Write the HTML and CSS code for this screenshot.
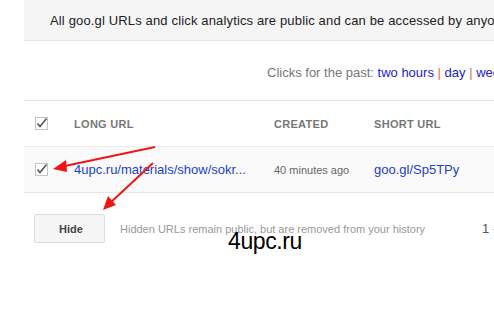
FILE: index.html
```html
<!DOCTYPE html>
<html lang="en">
<head>
  <meta charset="UTF-8" />
  <title>goo.gl URL shortener</title>
  <link rel="stylesheet" href="styles.css">
</head>
<body>

<div class="page">
  <div class="notice">All goo.gl URLs and click analytics are public and can be accessed by anyone.</div>

  <div class="range">
    Clicks for the past: <a href="#">two hours</a> <span class="sep">|</span> <a href="#">day</a> <span class="sep">|</span> <a href="#">week</a>
  </div>

  <div class="urls">
    <div class="row head">
      <span class="check"><svg width="13" height="13" viewBox="0 0 13 13"><rect x="0.5" y="0.5" width="12" height="12" fill="#fff" stroke="#c6c6c6"/><path d="M2.5 6.5 L5 9.5 L11.5 1.5" fill="none" stroke="#555" stroke-width="1.6"/></svg></span>
      <span>LONG URL</span>
      <span>CREATED</span>
      <span>SHORT URL</span>
    </div>
    <div class="row item">
      <span class="check"><svg width="13" height="13" viewBox="0 0 13 13"><rect x="0.5" y="0.5" width="12" height="12" fill="#fff" stroke="#c6c6c6"/><path d="M2.5 6.5 L5 9.5 L11.5 1.5" fill="none" stroke="#555" stroke-width="1.6"/></svg></span>
      <a href="#" class="long">4upc.ru/materials/show/sokr...</a>
      <span class="created">40 minutes ago</span>
      <a href="#" class="short">goo.gl/Sp5TPy</a>
    </div>
  </div>

  <div class="footer">
    <button class="button">Hide</button>
    <span class="hint">Hidden URLs remain public, but are removed from your history</span>
    <span class="pages">1 - 1 of 1</span>
  </div>
</div>

<div class="watermark">4upc.ru</div>

<svg class="arrows" width="494" height="314" viewBox="0 0 494 314">
  <g stroke="#f01515" stroke-width="2" fill="#f01515">
    <line x1="155" y1="147" x2="60" y2="167"/>
    <polygon points="53,169 66,160 67,172" stroke="none"/>
    <line x1="153" y1="163" x2="109" y2="204"/>
    <polygon points="103,210 108,196 116,205" stroke="none"/>
  </g>
</svg>

</body>
</html>
```

FILE: styles.css
```css
body {
  margin: 0;
  font-family: "Liberation Sans", Arial, sans-serif;
  background: #fff;
  overflow: hidden;
  position: relative;
  height: 314px;
}
a {
  text-decoration: none;
  color: #1a3fcc;
}
.page {
  margin-left: 24px;
  width: 600px;
  white-space: nowrap;
}
.notice {
  height: 40px;
  line-height: 41px;
  padding-left: 26px;
  background: #f5f5f5;
  border-bottom: 1px solid #e5e5e5;
  font-size: 13px;
  letter-spacing: 0.15px;
  color: #222;
}
.range {
  padding-left: 243px;
  height: 59px;
  line-height: 64px;
  font-size: 13px;
  color: #777;
  border-bottom: 1px solid #e5e5e5;
}
.range a {
  color: #2222cc;
}
.range .sep {
  color: #e07050;
}
.row {
  display: grid;
  grid-template-columns: 39px 200px 100px 1fr;
  align-items: center;
  height: 45px;
  padding-left: 11px;
}
.check svg {
  display: block;
}
.head {
  font-size: 11px;
  font-weight: bold;
  color: #777;
  letter-spacing: 0.3px;
  border-bottom: 1px solid #ebebeb;
}
.item {
  background: #fafafa;
  border-bottom: 1px solid #e5e5e5;
  font-size: 13px;
}
.item .created {
  font-size: 11px;
  color: #666;
}
.footer {
  display: flex;
  align-items: center;
  margin-top: 21px;
  padding-left: 10px;
}
.button {
  width: 71px;
  height: 29px;
  background: #f5f5f5;
  border: 1px solid #dcdcdc;
  border-radius: 2px;
  font-family: inherit;
  font-size: 11px;
  font-weight: bold;
  color: #444;
  padding: 0 0 0 3px;
}
.hint {
  margin-left: 15px;
  font-size: 11px;
  color: #999;
}
.pages {
  margin-left: 57px;
  font-size: 13px;
  color: #555;
}
.watermark {
  position: absolute;
  left: 228px;
  top: 228px;
  font-size: 23px;
  color: #000;
  letter-spacing: -0.4px;
}
.arrows {
  position: absolute;
  left: 0;
  top: 0;
}
```
